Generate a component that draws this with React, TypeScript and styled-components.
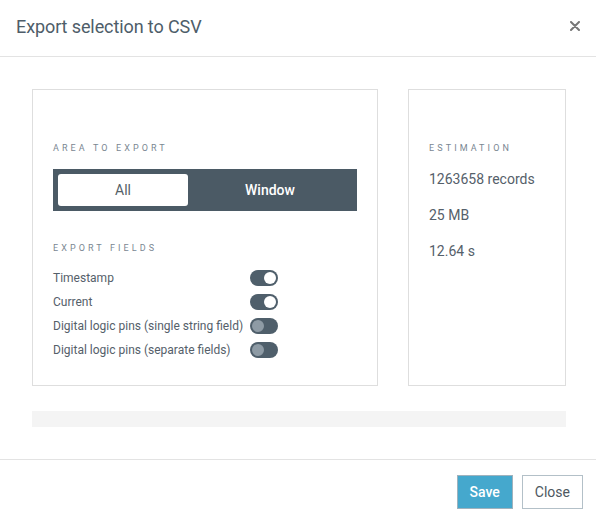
import React, { useState } from 'react';
import styled, { createGlobalStyle } from 'styled-components';

const GlobalStyle = createGlobalStyle`
  body {
    margin: 0;
    background: #fff;
    font-family: Roboto, 'Liberation Sans', sans-serif;
  }
`;

const Modal = styled.div`
  width: 596px;
  min-height: 521px;
  display: flex;
  flex-direction: column;
  background: #fff;
`;

const Header = styled.header`
  height: 56px;
  display: flex;
  align-items: center;
  justify-content: space-between;
  padding: 0 14px 0 16px;
  border-bottom: 1px solid #e3e3e3;
`;

const Title = styled.h1`
  margin: 0;
  font-size: 18px;
  font-weight: 400;
  letter-spacing: -0.1px;
  color: #4e5d69;
  padding-bottom: 3px;
`;

const CloseX = styled.button`
  border: none;
  background: none;
  padding: 0;
  width: 14px;
  height: 14px;
  display: flex;
  align-items: center;
  justify-content: center;
  cursor: pointer;
  margin-bottom: 4px;
`;

const Body = styled.div`
  padding: 32px 30px 32px 32px;
`;

const Panels = styled.div`
  display: flex;
  gap: 30px;
  height: 297px;
`;

const Panel = styled.section<{ width: number }>`
  box-sizing: border-box;
  width: ${(p) => p.width}px;
  border: 1px solid #dedede;
  padding: 52px 20px 0 20px;
`;

const SectionLabel = styled.div<{ gap?: number }>`
  font-size: 9px;
  line-height: 12px;
  letter-spacing: 3.1px;
  color: #7a8792;
  text-transform: uppercase;
  margin-top: ${(p) => p.gap ?? 0}px;
`;

const Segmented = styled.div`
  margin-top: 15px;
  width: 304px;
  height: 42px;
  box-sizing: border-box;
  padding: 5px;
  background: #4b5a65;
  display: flex;
`;

const Segment = styled.button<{ active: boolean }>`
  border: none;
  font-family: inherit;
  font-size: 14px;
  cursor: pointer;
  border-radius: 3px;
  height: 32px;
  background: ${(p) => (p.active ? '#fff' : 'transparent')};
  color: ${(p) => (p.active ? '#555f68' : '#fff')};
  font-weight: ${(p) => (p.active ? 400 : 500)};
  flex: ${(p) => (p.active ? '0 0 130px' : '1')};
`;

const FieldList = styled.div`
  margin-top: 12px;
  display: flex;
  flex-direction: column;
  width: 225px;
`;

const FieldRow = styled.label`
  display: flex;
  align-items: center;
  justify-content: space-between;
  height: 24px;
  font-size: 12px;
  color: #55606a;
  cursor: pointer;
`;

const Toggle = styled.span<{ on: boolean }>`
  width: 28px;
  height: 16px;
  border-radius: 8px;
  background: #4f5f6b;
  display: flex;
  align-items: center;
  padding: 0 2px;
  box-sizing: border-box;
  justify-content: ${(p) => (p.on ? 'flex-end' : 'flex-start')};
  &::after {
    content: '';
    width: 12px;
    height: 12px;
    border-radius: 50%;
    background: ${(p) => (p.on ? '#fff' : '#8e9ba5')};
  }
`;

const Stat = styled.div<{ first?: boolean }>`
  font-size: 14px;
  line-height: 20px;
  color: #55606a;
  margin-top: ${(p) => (p.first ? 15 : 16)}px;
`;

const Progress = styled.div`
  margin-top: 25px;
  height: 16px;
  width: 534px;
  background: #f4f4f4;
`;

const Footer = styled.footer`
  border-top: 1px solid #e3e3e3;
  display: flex;
  justify-content: flex-end;
  gap: 9px;
  padding: 15px 13px 12px 0;
`;

const Button = styled.button<{ primary?: boolean }>`
  height: 34px;
  box-sizing: border-box;
  padding: 0 ${(p) => (p.primary ? 12 : 12)}px;
  font-family: inherit;
  font-size: 14px;
  cursor: pointer;
  border: 1px solid ${(p) => (p.primary ? '#9fb2bd' : '#b3c0c8')};
  background: ${(p) => (p.primary ? '#45a8cd' : '#fff')};
  color: ${(p) => (p.primary ? '#fff' : '#4e5861')};
  font-weight: ${(p) => (p.primary ? 500 : 400)};
`;

const fields = [
  { name: 'Timestamp', on: true },
  { name: 'Current', on: true },
  { name: 'Digital logic pins (single string field)', on: false },
  { name: 'Digital logic pins (separate fields)', on: false },
];

export default function App() {
  const [area, setArea] = useState<'all' | 'window'>('all');
  const [state, setState] = useState(fields.map((f) => f.on));

  return (
    <Modal>
      <GlobalStyle />
      <Header>
        <Title>Export selection to CSV</Title>
        <CloseX aria-label="Close">
          <svg width="10" height="10" viewBox="0 0 10 10">
            <path d="M1 1 L9 9 M9 1 L1 9" stroke="#777" strokeWidth="2" strokeLinecap="round" />
          </svg>
        </CloseX>
      </Header>
      <Body>
        <Panels>
          <Panel width={346}>
            <SectionLabel>Area to export</SectionLabel>
            <Segmented>
              <Segment active={area === 'all'} onClick={() => setArea('all')}>
                All
              </Segment>
              <Segment active={area === 'window'} onClick={() => setArea('window')}>
                Window
              </Segment>
            </Segmented>
            <SectionLabel gap={31}>Export fields</SectionLabel>
            <FieldList>
              {fields.map((f, i) => (
                <FieldRow
                  key={f.name}
                  onClick={() => setState((s) => s.map((v, j) => (j === i ? !v : v)))}
                >
                  {f.name}
                  <Toggle on={state[i]} />
                </FieldRow>
              ))}
            </FieldList>
          </Panel>
          <Panel width={158}>
            <SectionLabel>Estimation</SectionLabel>
            <Stat first>1263658 records</Stat>
            <Stat>25 MB</Stat>
            <Stat>12.64 s</Stat>
          </Panel>
        </Panels>
        <Progress />
      </Body>
      <Footer>
        <Button primary>Save</Button>
        <Button>Close</Button>
      </Footer>
    </Modal>
  );
}
